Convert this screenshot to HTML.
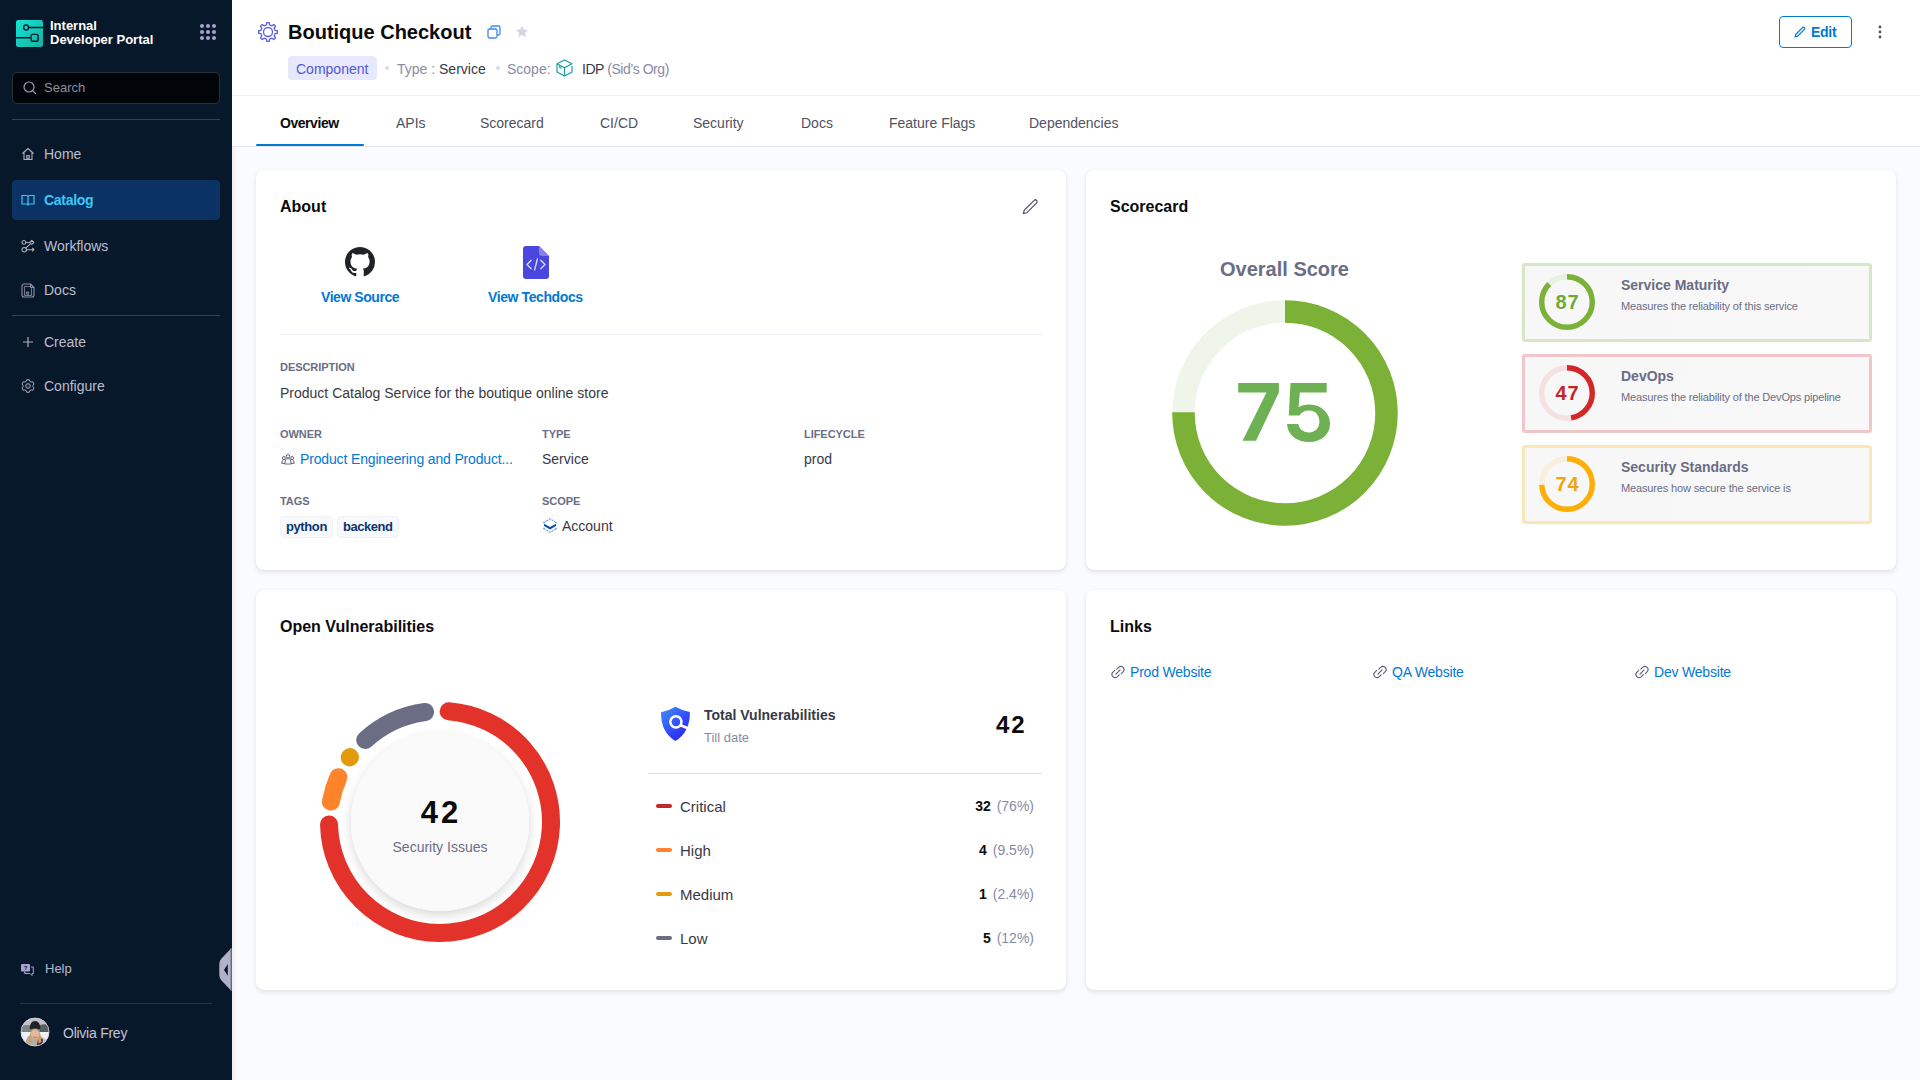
<!DOCTYPE html>
<html><head><meta charset="utf-8">
<style>
*{box-sizing:border-box;margin:0;padding:0}
html,body{width:1920px;height:1080px;overflow:hidden}
body{font-family:"Liberation Sans",sans-serif;background:#FAFBFE;position:relative;color:#22222A}
.abs{position:absolute}
.t{position:absolute;white-space:nowrap;line-height:1}
/* sidebar */
#side{position:absolute;left:0;top:0;width:232px;height:1080px;background:#07182B}
.nav .t{color:#BDBECE;font-size:14px}
/* header */
#hdr{position:absolute;left:232px;top:0;width:1688px;height:147px;background:#fff;border-bottom:1px solid #E6E7EE}
#hdr .sep{position:absolute;left:0;top:95px;width:1688px;height:1px;background:#F0F1F6}
.tab{position:absolute;top:116px;font-size:14px;color:#4F5162;white-space:nowrap;line-height:1}
.card{position:absolute;background:#fff;border-radius:8px;box-shadow:0 0 1px rgba(40,41,61,.07),0 2px 4px rgba(96,97,112,.16)}
.ctitle{position:absolute;left:24px;top:29px;font-size:16px;font-weight:bold;color:#0B0B0D;line-height:1}
.lbl{position:absolute;font-size:11px;font-weight:bold;color:#6B6D85;line-height:1;letter-spacing:-0.05px}
.val{position:absolute;font-size:14px;color:#383946;line-height:1;white-space:nowrap}
.link{color:#0278D5}
</style></head>
<body>
<div id="side">
  <!-- logo -->
  <svg class="abs" style="left:16px;top:20px" width="27" height="27" viewBox="0 0 27 27">
    <defs><linearGradient id="lg" x1="0" y1="0" x2="1" y2="1"><stop offset="0" stop-color="#12E6D6"/><stop offset="1" stop-color="#17AFA2"/></linearGradient></defs>
    <rect width="27" height="27" rx="2.2" fill="url(#lg)"/>
    <path d="M12.6 7.5H27M0 17.7H14.4" stroke="#07182B" stroke-width="1.5"/>
    <circle cx="10.1" cy="7.5" r="2.45" fill="none" stroke="#07182B" stroke-width="1.4"/>
    <rect x="15.1" y="14.4" width="7" height="6.9" rx="1.4" fill="none" stroke="#07182B" stroke-width="1.4"/>
  </svg>
  <div class="t" style="left:50px;top:19px;font-size:13px;font-weight:bold;color:#fff;line-height:14px">Internal<br>Developer Portal</div>
  <svg class="abs" style="left:200px;top:24px" width="16" height="16" viewBox="0 0 16 16" fill="#A6A4CC">
    <circle cx="2" cy="2" r="2"/><circle cx="8" cy="2" r="2"/><circle cx="14" cy="2" r="2"/>
    <circle cx="2" cy="8" r="2"/><circle cx="8" cy="8" r="2"/><circle cx="14" cy="8" r="2"/>
    <circle cx="2" cy="14" r="2"/><circle cx="8" cy="14" r="2"/><circle cx="14" cy="14" r="2"/>
  </svg>
  <div class="abs" style="left:12px;top:72px;width:208px;height:32px;background:#02050A;border:1px solid #2B3038;border-radius:5px"></div>
  <svg class="abs" style="left:23px;top:81px" width="14" height="14" viewBox="0 0 14 14" fill="none" stroke="#9A9CA6" stroke-width="1.2"><circle cx="6" cy="6" r="5"/><path d="M9.7 9.7L13 13"/></svg>
  <div class="t" style="left:44px;top:81px;font-size:13px;color:#8E9099">Search</div>
  <div class="abs" style="left:12px;top:119px;width:208px;height:1px;background:#3A3F4C"></div>

  <div class="nav">
    <!-- Home -->
    <svg class="abs" style="left:21px;top:147px" width="14" height="14" viewBox="0 0 14 14" fill="none" stroke="#AFB1BE" stroke-width="1.1"><path d="M1.5 6.5L7 1.5L12.5 6.5M3 5.3V12.5H11V5.3"/><rect x="5.7" y="8.7" width="2.6" height="2.6"/></svg>
    <div class="t" style="left:44px;top:147px">Home</div>
    <div class="abs" style="left:12px;top:180px;width:208px;height:40px;background:#0A3364;border-radius:4px"></div>
    <svg class="abs" style="left:21px;top:193px" width="14" height="14" viewBox="0 0 14 14" fill="none" stroke="#3DC7F6" stroke-width="1.2"><path d="M1 2.5H5.5Q7 2.5 7 4V12.5Q7 11 5.5 11H1ZM13 2.5H8.5Q7 2.5 7 4V12.5Q7 11 8.5 11H13Z"/></svg>
    <div class="t" style="left:44px;top:193px;color:#3DC7F6;font-weight:bold;letter-spacing:-0.3px">Catalog</div>
    <svg class="abs" style="left:21px;top:239px" width="14" height="14" viewBox="0 0 14 14" fill="none" stroke="#AFB1C2" stroke-width="1.05" stroke-linejoin="round"><circle cx="2.9" cy="3.4" r="1.9"/><path d="M10.8 1.3L12.9 3.4L10.8 5.5L8.7 3.4Z"/><path d="M4.8 3.4H8.7M9.6 4.7L4.4 9.3"/><circle cx="3.2" cy="10.7" r="2.2"/><path d="M5.4 10.7H13M11.2 9L13 10.7L11.2 12.4"/></svg>
    <div class="t" style="left:44px;top:239px">Workflows</div>
    <svg class="abs" style="left:21px;top:283px" width="14" height="15" viewBox="0 0 14 15" fill="none" stroke="#8F92A8" stroke-width="1.1" stroke-linejoin="round"><path d="M3 1H9.5L13 4.5V12Q13 14 11 14H3Q1 14 1 12V3Q1 1 3 1Z"/><path d="M9.5 1V3.5Q9.5 4.5 10.5 4.5H13"/><path d="M3.5 3.5V12.5H10.5V5.5L8.5 3.5Z" fill="#07182B" stroke="#8F92A8" stroke-width="0.8"/><path d="M4.8 9.3H8.2M4.8 11H8.2" stroke="#9EA1B5"/></svg>
    <div class="t" style="left:44px;top:283px">Docs</div>
    <div class="abs" style="left:12px;top:315px;width:208px;height:1px;background:#3A3F4C"></div>
    <svg class="abs" style="left:21px;top:335px" width="14" height="14" viewBox="0 0 14 14" fill="none" stroke="#AFB1C2" stroke-width="1.2"><path d="M7 2V12M2 7H12"/></svg>
    <div class="t" style="left:44px;top:335px">Create</div>
    <svg class="abs" style="left:21px;top:379px" width="14" height="14" viewBox="0 0 14 14" fill="none" stroke="#AFB1C2" stroke-width="1" stroke-linejoin="round"><path d="M5.16 2.35 L5.67 0.74 L8.33 0.74 L8.84 2.35 L10.11 3.08 L11.76 2.72 L13.09 5.02 L11.95 6.27 L11.95 7.73 L13.09 8.98 L11.76 11.28 L10.11 10.92 L8.84 11.65 L8.33 13.26 L5.67 13.26 L5.16 11.65 L3.89 10.92 L2.24 11.28 L0.91 8.98 L2.05 7.73 L2.05 6.27 L0.91 5.02 L2.24 2.72 L3.89 3.08Z"/><circle cx="7" cy="7" r="2.3"/><circle cx="7" cy="7" r="0.5" fill="#8F91A3" stroke="none"/></svg>
    <div class="t" style="left:44px;top:379px">Configure</div>
  </div>
  <!-- help -->
  <svg class="abs" style="left:21px;top:964px" width="13" height="12" viewBox="0 0 13 12"><rect x="0" y="0" width="9" height="7.5" rx="1" fill="#A6A4CC"/><path d="M3 7.5V10L5 8" fill="#A6A4CC"/><path d="M10 3H12.3V9.5H11V11.5L9 9.5H4" fill="none" stroke="#A6A4CC" stroke-width="1"/><text x="4.5" y="6" font-size="6" font-weight="bold" fill="#07182B" text-anchor="middle" font-family="Liberation Sans">?</text></svg>
  <div class="t" style="left:45px;top:962px;font-size:13px;color:#B6B8CC">Help</div>
  <svg class="abs" style="left:218px;top:946px" width="14" height="48" viewBox="0 0 14 48"><path d="M13.5 2L3.5 12.5Q1.3 14.8 1.3 18V29Q1.3 32.2 3.5 34.5L13.5 45Z" fill="#B1B2C8"/><path d="M13 2V45" stroke="#6F7189" stroke-width="1"/><path d="M9.8 18V29.8L6 23.9Z" fill="#07182B"/></svg>
  <div class="abs" style="left:20px;top:1003px;width:192px;height:1px;background:#2F3442"></div>
  <svg class="abs" style="left:20px;top:1017px" width="30" height="30" viewBox="0 0 30 30">
  <defs><clipPath id="avc"><circle cx="15" cy="15" r="14"/></clipPath></defs>
  <g clip-path="url(#avc)">
    <rect width="30" height="30" fill="#D9D8DE"/>
    <rect y="0" width="30" height="9" fill="#C4C0C6"/>
    <path d="M0 9Q8 7 15 9T30 8V16H0Z" fill="#7C868A"/>
    <path d="M20 8Q26 6 30 9V15H20Z" fill="#55615F"/>
    <rect y="15" width="30" height="10" fill="#EEF1F6"/>
    <path d="M5 30Q5 21 10 18L15 21L19 18Q25 20 26 30Z" fill="#B9AA9C"/>
    <path d="M16.5 30L18.5 20L23 22.5L22 30Z" fill="#5C2C30"/>
    <path d="M22 30L23.5 21Q28 23 28.5 30Z" fill="#A8C0DA"/>
    <path d="M8.8 26Q8.5 13 15 12Q21.5 13 21.2 25L18.5 26.5L17.5 16H12.5L11.5 27Z" fill="#C9A273"/>
    <ellipse cx="15" cy="17" rx="4" ry="4.8" fill="#E3B9A0"/>
    <path d="M13.2 19.8Q15 21.2 16.8 19.8" stroke="#C85A5A" stroke-width="0.9" fill="none"/>
    <path d="M9.8 12.5Q9.5 4 15 4Q20.5 4 20.3 12.5Q15 10.5 9.8 12.5Z" fill="#222226"/>
  </g>
  <circle cx="15" cy="15" r="14" fill="none" stroke="#D0D2DE" stroke-width="0.8"/>
</svg>
  <div class="t" style="left:63px;top:1026px;font-size:14px;color:#C4C5D6;letter-spacing:-0.25px">Olivia Frey</div>
</div>

<div id="hdr">
  <svg class="abs" style="left:25px;top:21px" width="22" height="22" viewBox="0 0 24 24" fill="none" stroke="#5A5CEB" stroke-width="1.4" stroke-linejoin="round"><circle cx="12" cy="12" r="4.9"/><path d="M10.32 4.18 L10.63 1.79 L13.37 1.79 L13.68 4.18 L16.34 5.28 L18.25 3.81 L20.19 5.75 L18.72 7.66 L19.82 10.32 L22.21 10.63 L22.21 13.37 L19.82 13.68 L18.72 16.34 L20.19 18.25 L18.25 20.19 L16.34 18.72 L13.68 19.82 L13.37 22.21 L10.63 22.21 L10.32 19.82 L7.66 18.72 L5.75 20.19 L3.81 18.25 L5.28 16.34 L4.18 13.68 L1.79 13.37 L1.79 10.63 L4.18 10.32 L5.28 7.66 L3.81 5.75 L5.75 3.81 L7.66 5.28Z"/></svg>
  <div class="t" style="left:56px;top:22px;font-size:20px;font-weight:bold;color:#0B0B0D">Boutique Checkout</div>
  <svg class="abs" style="left:255px;top:25px" width="14" height="14" viewBox="0 0 14 14" fill="none" stroke="#3C8BF0" stroke-width="1.3"><rect x="1" y="4" width="9" height="9" rx="1.5"/><path d="M4 4V2.5Q4 1 5.5 1H11.5Q13 1 13 2.5V8.5Q13 10 11.5 10H10"/></svg>
  <svg class="abs" style="left:283px;top:25px" width="14" height="13" viewBox="0 0 24 23"><path d="M12 1l3.2 7 7.8.8-5.8 5.2 1.7 7.7L12 17.8 5.1 21.7l1.7-7.7L1 8.8 8.8 8z" fill="#D5D6E4"/></svg>
  <div class="abs" style="left:56px;top:56px;width:89px;height:24px;background:#E8E8FD;border-radius:4px"></div>
  <div class="t" style="left:64px;top:62px;font-size:14px;color:#4F58D6">Component</div>
  <div class="abs" style="left:153px;top:66px;width:4px;height:4px;border-radius:50%;background:#D9DAE5"></div>
  <div class="t" style="left:165px;top:62px;font-size:14px;color:#8A8BA3">Type : <span style="color:#383946">Service</span></div>
  <div class="abs" style="left:264px;top:66px;width:4px;height:4px;border-radius:50%;background:#D9DAE5"></div>
  <div class="t" style="left:275px;top:62px;font-size:14px;color:#8A8BA3">Scope:</div>
  <svg class="abs" style="left:324px;top:59px" width="17" height="18" viewBox="0 0 17 18" fill="none" stroke="#1499A6" stroke-width="1.15" stroke-linejoin="round" stroke-linecap="round"><path d="M8.5 0.9L16 4.8L8.5 8.7L1 4.8Z M1 4.8V13.1L8.5 17L16 13.1V7.3 M8.5 8.7V17 M3.7 6.4V8.4L5.2 9.1"/></svg>
  <div class="t" style="left:350px;top:62px;font-size:14px;color:#383946;letter-spacing:-0.45px">IDP <span style="color:#8A8BA3">(Sid’s Org)</span></div>
  <div class="sep"></div>
  <!-- edit -->
  <div class="abs" style="left:1547px;top:16px;width:73px;height:32px;border:1.5px solid #0278D5;border-radius:4px"></div>
  <svg class="abs" style="left:1562px;top:26px" width="12" height="12" viewBox="0 0 12 12" fill="none" stroke="#0278D5" stroke-width="1.2"><path d="M1.2 10.8L1.6 8.6L8.6 1.6Q9.4 0.8 10.2 1.6L10.4 1.8Q11.2 2.6 10.4 3.4L3.4 10.4Z"/></svg>
  <div class="t" style="left:1579px;top:25px;font-size:14px;font-weight:bold;color:#0278D5;letter-spacing:-0.3px">Edit</div>
  <svg class="abs" style="left:1646px;top:25px" width="4" height="14" viewBox="0 0 4 14" fill="#4F5162"><circle cx="2" cy="2" r="1.4"/><circle cx="2" cy="7" r="1.4"/><circle cx="2" cy="12" r="1.4"/></svg>
  <!-- tabs -->
  <div class="tab" style="left:48px;color:#0B0B0D;font-weight:bold;letter-spacing:-0.45px">Overview</div>
  <div class="abs" style="left:24px;top:144px;width:108px;height:2px;background:#0278D5;border-radius:1px"></div>
  <div class="tab" style="left:164px">APIs</div>
  <div class="tab" style="left:248px">Scorecard</div>
  <div class="tab" style="left:368px">CI/CD</div>
  <div class="tab" style="left:461px">Security</div>
  <div class="tab" style="left:569px">Docs</div>
  <div class="tab" style="left:657px">Feature Flags</div>
  <div class="tab" style="left:797px">Dependencies</div>
</div>

<div class="abs" style="left:232px;top:147px;width:6px;height:933px;background:linear-gradient(90deg,rgba(40,41,61,.05),rgba(40,41,61,0))"></div>
<!-- ABOUT CARD -->
<div class="card" style="left:256px;top:170px;width:810px;height:400px">
  <div class="ctitle">About</div>
  <svg class="abs" style="left:766px;top:28px" width="17" height="17" viewBox="0 0 17 17" fill="none" stroke="#4F5162" stroke-width="1.2"><path d="M1.5 15.5L2.2 12.3L12.2 2.3Q13.3 1.2 14.4 2.3L14.7 2.6Q15.8 3.7 14.7 4.8L4.7 14.8Z"/></svg>
  <!-- github -->
  <svg class="abs" style="left:89px;top:77px" width="30" height="30" viewBox="0 0 16 16"><path fill="#1F2328" d="M8 0C3.58 0 0 3.58 0 8c0 3.54 2.29 6.53 5.47 7.59.4.07.55-.17.55-.38 0-.19-.01-.82-.01-1.49-2.01.37-2.53-.49-2.69-.94-.09-.23-.48-.94-.82-1.13-.28-.15-.68-.52-.01-.53.63-.01 1.08.58 1.23.82.72 1.21 1.87.87 2.33.66.07-.52.28-.87.51-1.07-1.78-.2-3.640-.89-3.640-3.95 0-.87.31-1.59.82-2.15-.08-.2-.36-1.02.08-2.12 0 0 .67-.21 2.2.82.64-.18 1.32-.27 2-.27.68 0 1.36.09 2 .27 1.53-1.04 2.2-.82 2.2-.82.44 1.1.16 1.92.08 2.12.51.56.82 1.27.82 2.15 0 3.07-1.87 3.750-3.650 3.95.29.25.54.73.54 1.48 0 1.07-.01 1.93-.01 2.2 0 .21.15.46.55.38A8.013 8.013 0 0016 8c0-4.42-3.58-8-8-8z"/></svg>
  <div class="t link" style="left:65px;top:120px;font-size:14px;font-weight:bold;letter-spacing:-0.45px">View Source</div>
  <!-- techdocs -->
  <svg class="abs" style="left:267px;top:76px" width="26" height="33" viewBox="0 0 26 33"><path d="M3 0H16L26 10V30Q26 33 23 33H3Q0 33 0 30V3Q0 0 3 0Z" fill="#4B47DE"/><path d="M16 0L26 10H19Q16 10 16 7Z" fill="#8580EA"/><path d="M8.5 14L4 18.5L8.5 23M17.5 14L22 18.5L17.5 23M14.5 12.5L11.5 24.5" fill="none" stroke="#DCDAFA" stroke-width="1.3"/></svg>
  <div class="t link" style="left:232px;top:120px;font-size:14px;font-weight:bold;letter-spacing:-0.4px">View Techdocs</div>
  <div class="abs" style="left:24px;top:164px;width:762px;height:1px;background:#EEEFF5"></div>
  <div class="lbl" style="left:24px;top:192px">DESCRIPTION</div>
  <div class="val" style="left:24px;top:216px">Product Catalog Service for the boutique online store</div>
  <div class="lbl" style="left:24px;top:259px">OWNER</div>
  <svg class="abs" style="left:25px;top:284px" width="14" height="11" viewBox="0 0 14 11" fill="none" stroke="#4A4C5E" stroke-width="0.85" stroke-linejoin="round"><circle cx="7" cy="2.3" r="1.7"/><circle cx="2.9" cy="4" r="1.5"/><circle cx="11.1" cy="4" r="1.5"/><path d="M3.6 10H10.4L9.2 5.6Q8.8 4.7 7 4.7Q5.2 4.7 4.8 5.6Z"/><path d="M0.7 9.3L1.5 6.4Q1.9 5.6 2.9 5.6Q3.8 5.6 4.3 6.2M13.3 9.3L12.5 6.4Q12.1 5.6 11.1 5.6Q10.2 5.6 9.7 6.2M0.7 9.3H3.8M13.3 9.3H10.2"/></svg>
  <div class="val link" style="left:44px;top:282px;letter-spacing:-0.15px">Product Engineering and Product...</div>
  <div class="lbl" style="left:286px;top:259px">TYPE</div>
  <div class="val" style="left:286px;top:282px">Service</div>
  <div class="lbl" style="left:548px;top:259px">LIFECYCLE</div>
  <div class="val" style="left:548px;top:282px">prod</div>
  <div class="lbl" style="left:24px;top:326px">TAGS</div>
  <div class="abs" style="left:24px;top:346px;width:53px;height:22px;background:#F8F9FC;border:1px solid #F0F2F7;border-radius:4px"></div>
  <div class="t" style="left:30px;top:350px;font-size:13px;font-weight:bold;color:#0C3470;letter-spacing:-0.4px">python</div>
  <div class="abs" style="left:81px;top:346px;width:62px;height:22px;background:#F8F9FC;border:1px solid #F0F2F7;border-radius:4px"></div>
  <div class="t" style="left:87px;top:350px;font-size:13px;font-weight:bold;color:#0C3470;letter-spacing:-0.45px">backend</div>
  <div class="lbl" style="left:286px;top:326px">SCOPE</div>
  <svg class="abs" style="left:287px;top:348px" width="14" height="15" viewBox="0 0 13 14"><path d="M0.7 4.4L6.5 0.7L12.3 4.4M0.7 9.8L6.5 13.4L12.3 9.8M0.7 3.6V5M12.3 3.6V5M0.7 9V10.4M12.3 9V10.4" fill="none" stroke="#6C9BE0" stroke-width="1" stroke-dasharray="2 0.8"/><path d="M0.9 5.3L6.5 8.4L12.1 5.3V7.5L6.5 10.8L0.9 7.5Z" fill="#0B4DA8"/></svg>
  <div class="val" style="left:306px;top:349px">Account</div>
</div>

<!-- SCORECARD -->
<div class="card" style="left:1086px;top:170px;width:810px;height:400px">
  <div class="ctitle">Scorecard</div>
  <div class="t" style="left:134px;top:89px;font-size:20px;font-weight:bold;color:#6B6D85">Overall Score</div>
  <svg class="abs" style="left:86px;top:130px" width="226" height="226" viewBox="0 0 226 226">
    <circle cx="113" cy="113" r="101.5" fill="none" stroke="#F0F5EA" stroke-width="22.5"/>
    <circle cx="113" cy="113" r="101.5" fill="none" stroke="#7CB137" stroke-width="22.5" stroke-dasharray="478.3 1000" transform="rotate(-90 113 113)"/>
    <path fill="#6DB154" d="M66.2 83H106.9V92.5L84 140.8H70.6L94.5 92.5H66.2Z M118.5 83H154.7V92.5H127.8L126.6 107.3Q130.5 104.5 137.5 104.5Q147 104.5 152.5 110.5Q158 116.5 158 123.5Q158 132 152 137Q146 142 137 142Q127.5 142 121.5 137Q115.5 132 115 124H126.3Q127 128 130 130.2Q133 132.4 137 132.4Q142 132.4 144.7 129.3Q147.5 126.2 147.5 121.5Q147.5 116.8 144.7 113.7Q142 110.6 137 110.6Q133.5 110.6 131 112Q128.5 113.4 127.5 115.5H116.8Z"/>
  </svg>
  <!-- score items -->
  <div class="abs" style="left:436px;top:93px;width:350px;height:79px;border:3px solid #D6E6C6;border-radius:3px;background:linear-gradient(110deg,#F7F7F7,#F8F8F9)"></div>
  <div class="abs" style="left:436px;top:184px;width:350px;height:79px;border:3px solid #F0C6C8;border-radius:3px;background:linear-gradient(110deg,#F7F7F7,#F8F8F9)"></div>
  <div class="abs" style="left:436px;top:275px;width:350px;height:79px;border:3px solid #FAE7B8;border-radius:3px;background:linear-gradient(110deg,#F7F7F7,#F8F8F9)"></div>
  <svg class="abs" style="left:453px;top:104px" width="56" height="56" viewBox="0 0 56 56">
    <circle cx="28" cy="28" r="25.3" fill="none" stroke="#E9F1E1" stroke-width="5.4"/>
    <circle cx="28" cy="28" r="25.3" fill="none" stroke="#7CB137" stroke-width="5.4" stroke-dasharray="138.3 1000" transform="rotate(-90 28 28)"/>
    <text x="28.5" y="34.5" text-anchor="middle" font-family="Liberation Sans" font-weight="bold" font-size="20" letter-spacing="1" fill="#6FA93A">87</text>
  </svg>
  <svg class="abs" style="left:453px;top:195px" width="56" height="56" viewBox="0 0 56 56">
    <circle cx="28" cy="28" r="25.3" fill="none" stroke="#F6E1E2" stroke-width="5.4"/>
    <circle cx="28" cy="28" r="25.3" fill="none" stroke="#D3282A" stroke-width="5.4" stroke-dasharray="74.7 1000" transform="rotate(-90 28 28)"/>
    <text x="28.5" y="34.5" text-anchor="middle" font-family="Liberation Sans" font-weight="bold" font-size="20" letter-spacing="1" fill="#C62424">47</text>
  </svg>
  <svg class="abs" style="left:453px;top:286px" width="56" height="56" viewBox="0 0 56 56">
    <circle cx="28" cy="28" r="25.3" fill="none" stroke="#F8EFDC" stroke-width="5.4"/>
    <circle cx="28" cy="28" r="25.3" fill="none" stroke="#FDAF08" stroke-width="5.4" stroke-dasharray="117.6 1000" transform="rotate(-90 28 28)"/>
    <text x="28.5" y="34.5" text-anchor="middle" font-family="Liberation Sans" font-weight="bold" font-size="20" letter-spacing="1" fill="#F2A40C">74</text>
  </svg>
  <div class="t" style="left:535px;top:108px;font-size:14px;font-weight:bold;color:#6B6D85">Service Maturity</div>
  <div class="t" style="left:535px;top:131px;font-size:11px;color:#6B6D85;letter-spacing:-0.15px">Measures the reliability of this service</div>
  <div class="t" style="left:535px;top:199px;font-size:14px;font-weight:bold;color:#6B6D85">DevOps</div>
  <div class="t" style="left:535px;top:222px;font-size:11px;color:#6B6D85;letter-spacing:-0.15px">Measures the reliability of the DevOps pipeline</div>
  <div class="t" style="left:535px;top:290px;font-size:14px;font-weight:bold;color:#6B6D85">Security Standards</div>
  <div class="t" style="left:535px;top:313px;font-size:11px;color:#6B6D85;letter-spacing:-0.15px">Measures how secure the service is</div>
</div>

<!-- VULNERABILITIES -->
<div class="card" style="left:256px;top:590px;width:810px;height:400px">
  <div class="ctitle">Open Vulnerabilities</div>
  <svg class="abs" style="left:58px;top:106px" width="252" height="252" viewBox="0 0 252 252" id="donut">
    <defs><radialGradient id="ig" cx="50%" cy="50%" r="50%"><stop offset="0.9" stop-color="#FAFAFB"/><stop offset="1" stop-color="#F0F0F2"/></radialGradient></defs>
    <filter id="sh" x="-30%" y="-30%" width="160%" height="160%"><feGaussianBlur in="SourceAlpha" stdDeviation="6"/><feOffset dy="4"/><feComponentTransfer><feFuncA type="linear" slope="0.16"/></feComponentTransfer><feMerge><feMergeNode/><feMergeNode in="SourceGraphic"/></feMerge></filter>
    <clipPath id="inner"><circle cx="126" cy="126" r="102"/></clipPath>
    <g clip-path="url(#inner)"><circle cx="126" cy="126" r="89" fill="#FAFAFB" filter="url(#sh)"/></g>
    <g fill="none" stroke-width="18" stroke-linecap="round">
      <path id="a-red" stroke="#E3322A" d="M134.71 15.34A111 111 0 1 1 15.03 128.52"/>
      <path id="a-orange" stroke="#FF832B" d="M16.89 105.58A111 111 0 0 1 24.44 81.21"/>
      <path id="a-yellow" stroke="#E29B0B" d="M35.75 61.38A111 111 0 0 1 35.97 61.07"/>
      <path id="a-grey" stroke="#6B6D85" d="M51.15 44.03A111 111 0 0 1 111.13 16.00"/>
    </g>
    <text x="127" y="127" text-anchor="middle" font-family="Liberation Sans" font-weight="bold" font-size="31" letter-spacing="3" fill="#0B0B0D">42</text>
    <text x="126" y="156" text-anchor="middle" font-family="Liberation Sans" font-size="14" fill="#6B6D85">Security Issues</text>
  </svg>
  <!-- shield -->
  <svg class="abs" style="left:404px;top:116px" width="32" height="36" viewBox="0 0 32 36"><defs><linearGradient id="sg" x1="0" y1="0" x2="0.8" y2="1"><stop offset="0" stop-color="#4191FF"/><stop offset="1" stop-color="#2A1FEF"/></linearGradient></defs><path d="M15.4 0.7Q8.5 4.8 1 6.2Q0.6 26 15.4 35Q30.2 26 29.9 6Q22.5 4.8 15.4 0.7Z" fill="url(#sg)"/><circle cx="15.9" cy="15.8" r="5.6" fill="none" stroke="#fff" stroke-width="2.5"/><path d="M20.6 19.3L32 24" stroke="#fff" stroke-width="2.6"/></svg>
  <div class="t" style="left:448px;top:118px;font-size:14px;font-weight:bold;color:#383946">Total Vulnerabilities</div>
  <div class="t" style="left:448px;top:141px;font-size:13px;color:#8A8BA3">Till date</div>
  <div class="t" style="left:740px;top:123px;font-size:24px;letter-spacing:2px;font-weight:bold;color:#0B0B0D">42</div>
  <div class="abs" style="left:392px;top:183px;width:394px;height:1px;background:#DCDDE6"></div>
  <div class="abs" style="left:400px;top:214px;width:16px;height:4px;border-radius:2px;background:#C3262B"></div>
  <div class="t" style="left:424px;top:209px;font-size:15px;color:#383946">Critical</div>
  <div class="t" style="right:32px;top:209px;font-size:14px;font-weight:bold;color:#0B0B0D">32 <span style="font-weight:normal;color:#8A8BA3;font-size:14px;margin-left:2px">(76%)</span></div>
  <div class="abs" style="left:400px;top:258px;width:16px;height:4px;border-radius:2px;background:#FF832B"></div>
  <div class="t" style="left:424px;top:253px;font-size:15px;color:#383946">High</div>
  <div class="t" style="right:32px;top:253px;font-size:14px;font-weight:bold;color:#0B0B0D">4 <span style="font-weight:normal;color:#8A8BA3;font-size:14px;margin-left:2px">(9.5%)</span></div>
  <div class="abs" style="left:400px;top:302px;width:16px;height:4px;border-radius:2px;background:#E29B0B"></div>
  <div class="t" style="left:424px;top:297px;font-size:15px;color:#383946">Medium</div>
  <div class="t" style="right:32px;top:297px;font-size:14px;font-weight:bold;color:#0B0B0D">1 <span style="font-weight:normal;color:#8A8BA3;font-size:14px;margin-left:2px">(2.4%)</span></div>
  <div class="abs" style="left:400px;top:346px;width:16px;height:4px;border-radius:2px;background:#6B6D85"></div>
  <div class="t" style="left:424px;top:341px;font-size:15px;color:#383946">Low</div>
  <div class="t" style="right:32px;top:341px;font-size:14px;font-weight:bold;color:#0B0B0D">5 <span style="font-weight:normal;color:#8A8BA3;font-size:14px;margin-left:2px">(12%)</span></div>
</div>

<!-- LINKS -->
<div class="card" style="left:1086px;top:590px;width:810px;height:400px">
  <div class="ctitle">Links</div>
  <svg class="abs" style="left:25px;top:75px" width="14" height="14" viewBox="0 0 14 14" fill="none" stroke="#5F6078" stroke-width="1.15" stroke-linecap="round"><path d="M5.8 4.2L7.6 2.4Q9.9 0.2 12.1 2.4Q14.3 4.6 12 6.9L10.3 8.6M8.2 9.8L6.4 11.6Q4.1 13.8 1.9 11.6Q-0.3 9.4 2 7.1L3.7 5.4M4.9 9.1L9.1 4.9"/></svg>
  <div class="t link" style="left:44px;top:75px;font-size:14px;letter-spacing:-0.2px">Prod Website</div>
  <svg class="abs" style="left:287px;top:75px" width="14" height="14" viewBox="0 0 14 14" fill="none" stroke="#5F6078" stroke-width="1.15" stroke-linecap="round"><path d="M5.8 4.2L7.6 2.4Q9.9 0.2 12.1 2.4Q14.3 4.6 12 6.9L10.3 8.6M8.2 9.8L6.4 11.6Q4.1 13.8 1.9 11.6Q-0.3 9.4 2 7.1L3.7 5.4M4.9 9.1L9.1 4.9"/></svg>
  <div class="t link" style="left:306px;top:75px;font-size:14px;letter-spacing:-0.2px">QA Website</div>
  <svg class="abs" style="left:549px;top:75px" width="14" height="14" viewBox="0 0 14 14" fill="none" stroke="#5F6078" stroke-width="1.15" stroke-linecap="round"><path d="M5.8 4.2L7.6 2.4Q9.9 0.2 12.1 2.4Q14.3 4.6 12 6.9L10.3 8.6M8.2 9.8L6.4 11.6Q4.1 13.8 1.9 11.6Q-0.3 9.4 2 7.1L3.7 5.4M4.9 9.1L9.1 4.9"/></svg>
  <div class="t link" style="left:568px;top:75px;font-size:14px;letter-spacing:-0.2px">Dev Website</div>
</div>
</body></html>
